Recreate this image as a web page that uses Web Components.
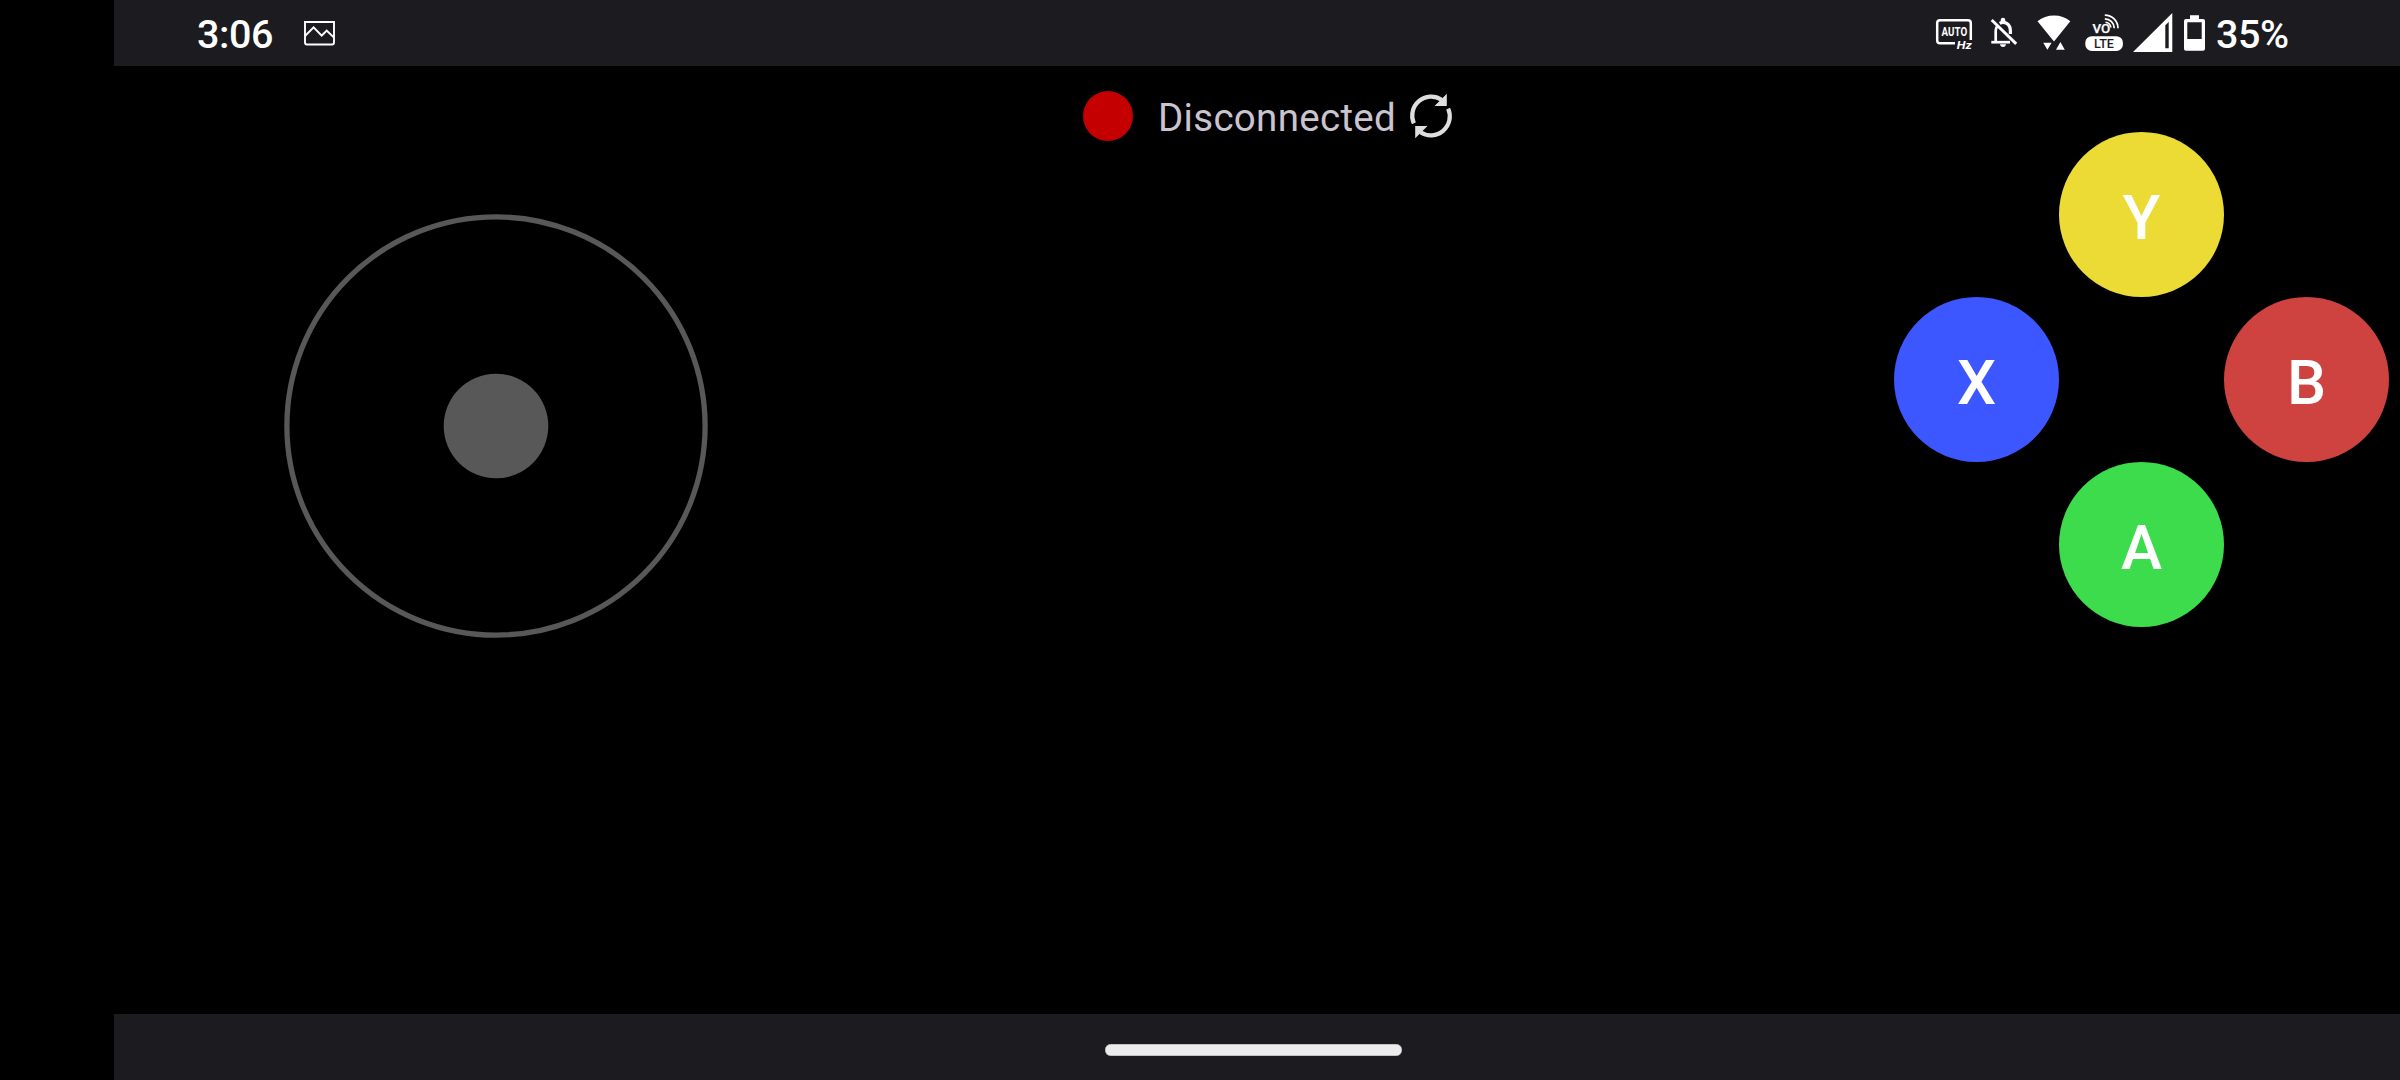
<!DOCTYPE html>
<html lang="en">
<head>
<meta charset="utf-8">
<title>Gamepad</title>
<style>
  html, body { margin: 0; height: 100%; background: #000; overflow: hidden; }
  body { font-family: Roboto, "Open Sans", sans-serif; }
</style>
</head>
<body>
<gamepad-app></gamepad-app>
<script>
  const define = (name, html) => {
    const template = document.createElement('template');
    template.innerHTML = html;
    customElements.define(name, class extends HTMLElement {
      constructor() {
        super();
        this.attachShadow({ mode: 'open' }).appendChild(template.content.cloneNode(true));
      }
    });
  };

  define('icon-picture', `
    <style>:host{display:block;width:32px;height:26px} svg{display:block}</style>
    <svg width="32" height="26" viewBox="304 20 32 26" fill="none" stroke="#fff">
      <path stroke-width="1.9" d="M305 22H334V42.5Q334 44.500 332 44.500H307Q305 44.500 305 42.500Z"/>
      <path stroke-width="2" d="M305 36L313.6 27.4L321.7 35.6L326.7 30.6L334 37.6"/>
    </svg>`);

  define('icon-auto-hz', `
    <style>:host{display:block;width:42px;height:40px} svg{display:block} text{font-family:Roboto,sans-serif;fill:#fff}</style>
    <svg width="42" height="40" viewBox="1935 17 42 40">
      <path fill="none" stroke="#fff" stroke-width="2.5" d="M1955 43.2H1940Q1937.2 43.2 1937.2 40.4V23Q1937.2 20.2 1940 20.2H1968Q1970.8 20.2 1970.8 23V40"/>
      <text x="1941.6" y="36.4" font-size="12.6" font-weight="700" textLength="25.6" lengthAdjust="spacingAndGlyphs">AUTO</text>
      <text x="1956.7" y="49.2" font-size="11.5" font-weight="700" font-style="italic" textLength="15" lengthAdjust="spacingAndGlyphs">Hz</text>
    </svg>`);

  define('icon-bell-off', `
    <style>:host{display:block;width:28px;height:32px} svg{display:block}</style>
    <svg width="28" height="32" viewBox="1990 17 28 32">
      <g fill="none" stroke="#fff">
        <path stroke-width="2.7" d="M1991.3 42.2H2010"/>
        <path stroke-width="2.7" d="M1995.7 42V31Q1995.7 28.5 1997 26.5"/>
        <path stroke-width="3.2" d="M1999.7 23.3C2004 20.7 2010.4 23.5 2010.4 31V34"/>
        <path stroke-width="2.9" d="M1991.7 20L2016.2 43.9"/>
      </g>
      <path fill="#fff" d="M2000.7 21.5V20Q2000.7 17.7 2003 17.7Q2005.3 17.7 2005.3 20V21.5ZM2000 44.3H2006Q2005.6 47 2003 47Q2000.4 47 2000 44.3Z"/>
    </svg>`);

  define('icon-wifi', `
    <style>:host{display:block;width:34px;height:38px} svg{display:block}</style>
    <svg width="34" height="38" viewBox="2037 14 34 38" fill="#fff">
      <path d="M2037.5 21.3Q2044.5 15.4 2054 15.4Q2063.5 15.4 2070.3 21.3L2054 41.6Z"/>
      <path d="M2043.2 42.7H2051.6L2047.4 49.8Z M2056 49.8H2064.8L2060.4 42Z"/>
    </svg>`);

  define('icon-volte', `
    <style>:host{display:block;width:40px;height:40px} svg{display:block} text{font-family:Roboto,sans-serif}</style>
    <svg width="40" height="40" viewBox="2084 13 40 40">
      <text x="2092.4" y="32.9" font-size="13.6" font-weight="500" fill="#fff" stroke="#fff" stroke-width=".25" textLength="17.8" lengthAdjust="spacingAndGlyphs">VO</text>
      <g fill="none" stroke="#fff" stroke-width="1.7">
        <path d="M2104.8 15.1A13.2 13.2 0 0 1 2118 28.3"/>
        <path d="M2104.8 18.8A9.5 9.5 0 0 1 2114.3 28.3"/>
        <path d="M2105.5 22.3A5.5 5.5 0 0 1 2110.8 27.5"/>
      </g>
      <rect x="2085.3" y="36.2" width="37.6" height="14.8" rx="6.5" fill="#fff"/>
      <text x="2093.9" y="48" font-size="12.3" font-weight="500" fill="#1c1b20" textLength="20" lengthAdjust="spacingAndGlyphs">LTE</text>
    </svg>`);

  define('icon-signal', `
    <style>:host{display:block;width:40px;height:40px} svg{display:block}</style>
    <svg width="40" height="40" viewBox="2133 13 40 40">
      <path fill="#fff" fill-rule="evenodd" d="M2133 52L2172.3 13V52Z M2165.3 25.2L2168.7 22V48.3H2165.3Z"/>
    </svg>`);

  define('icon-battery', `
    <style>:host{display:block;width:22px;height:38px} svg{display:block}</style>
    <svg width="22" height="38" viewBox="2184 14 22 38">
      <path fill="#fff" fill-rule="evenodd" d="M2190 15.3H2199V19H2203Q2205 19 2205 21V48.8Q2205 50.8 2203 50.8H2186Q2184 50.8 2184 48.8V21Q2184 19 2186 19H2190Z M2187.3 22.3V39H2201.7V22.3Z"/>
    </svg>`);

  define('icon-sync', `
    <style>:host{display:block;width:44px;height:46px} svg{display:block}</style>
    <svg width="44" height="46" viewBox="1409 93 44 46">
      <g fill="none" stroke="#dedede" stroke-width="4.2">
        <path d="M1413.8 123.3A19 19 0 0 1 1441.5 99.7"/>
        <path d="M1448.2 108.7A19 19 0 0 1 1420.5 132.3"/>
      </g>
      <path fill="#dedede" d="M1446.8 93.8V106H1434.5Z M1415.2 138.2V126H1427.5Z"/>
    </svg>`);

  define('status-bar', `
    <style>
      :host{display:flex;align-items:flex-start;box-sizing:border-box;height:66px;background:#1c1b20;color:#fff;
        padding:0 112px 0 83px;font-size:39.5px;font-weight:500;line-height:66px}
      .text{height:64px;padding-top:2px;white-space:nowrap;letter-spacing:-.4px}
      .left,.right{display:flex;align-items:flex-start}
      .right{margin-left:auto}
      icon-picture{margin:20px 0 0 31px}
      icon-auto-hz{margin:17px 13px 0 0}
      icon-bell-off{margin:17px 19px 0 0}
      icon-wifi{margin:14px 13px 0 0}
      icon-volte{margin:13px 9px 0 0}
      icon-signal{margin:13px 11px 0 0}
      icon-battery{margin:14px 10px 0 0}
      .clock{width:76px}
      .level{width:72px}
    </style>
    <div class="left"><div class="text clock"><slot name="clock"></slot></div><icon-picture></icon-picture></div>
    <div class="right">
      <icon-auto-hz></icon-auto-hz><icon-bell-off></icon-bell-off><icon-wifi></icon-wifi>
      <icon-volte></icon-volte><icon-signal></icon-signal><icon-battery></icon-battery>
      <div class="text level"><slot name="level"></slot></div>
    </div>`);

  define('connection-status', `
    <style>
      :host{display:flex;align-items:flex-start;height:50px;color:#cac4d0;font-size:38.5px;line-height:50px}
      .dot{width:50px;height:50px;border-radius:50%;background:#c40000}
      .label{width:236px;margin:2px 15px 0 25px;white-space:nowrap;letter-spacing:.3px}
      icon-sync{margin-top:2px}
    </style>
    <div class="dot"></div><div class="label"><slot></slot></div><icon-sync></icon-sync>`);

  define('joy-stick', `
    <style>:host{display:block;width:424px;height:424px} svg{display:block}</style>
    <svg width="424" height="424" viewBox="0 0 424 424">
      <circle cx="212" cy="212" r="209.1" fill="none" stroke="#585858" stroke-width="5.3"/>
      <circle cx="212" cy="212" r="52.3" fill="#585858"/>
    </svg>`);

  define('pad-button', `
    <style>
      :host{display:flex;justify-content:center;box-sizing:border-box;width:165px;height:165px;padding-top:3px;
        border-radius:50%;background:var(--pad-color);color:#fff;font-size:62px;font-weight:500;line-height:165px}
    </style>
    <slot></slot>`);

  define('button-diamond', `
    <style>
      :host{display:grid;grid-template:repeat(3,165px)/repeat(3,165px);grid-template-areas:". y ." "x . b" ". a ."}
      .y{grid-area:y;--pad-color:#ebdb34}
      .x{grid-area:x;--pad-color:#3c57ff}
      .b{grid-area:b;--pad-color:#ce4240}
      .a{grid-area:a;--pad-color:#3ddc4d}
    </style>
    <pad-button class="y">Y</pad-button><pad-button class="x">X</pad-button>
    <pad-button class="b">B</pad-button><pad-button class="a">A</pad-button>`);

  define('nav-bar', `
    <style>
      :host{display:flex;justify-content:center;box-sizing:border-box;height:66px;padding:30px 7px 0 0;background:#1c1b20}
      .handle{width:297px;height:12px;border-radius:6px;background:#ececec;box-shadow:inset 0 0 0 .5px #9a9a9c}
    </style>
    <div class="handle"></div>`);

  define('gamepad-app', `
    <style>
      :host{display:flex;flex-direction:column;box-sizing:border-box;width:2400px;height:1080px;padding-left:114px;background:#000}
      main{flex:1;display:flex;align-items:flex-start;justify-content:space-between;padding:0 11px 0 170px}
      joy-stick{margin-top:148px}
      connection-status{margin:25px 66px 0 0}
      button-diamond{margin-top:66px}
    </style>
    <status-bar><span slot="clock">3:06</span><span slot="level">35%</span></status-bar>
    <main>
      <joy-stick></joy-stick>
      <connection-status>Disconnected</connection-status>
      <button-diamond></button-diamond>
    </main>
    <nav-bar></nav-bar>`);
</script>
</body>
</html>
